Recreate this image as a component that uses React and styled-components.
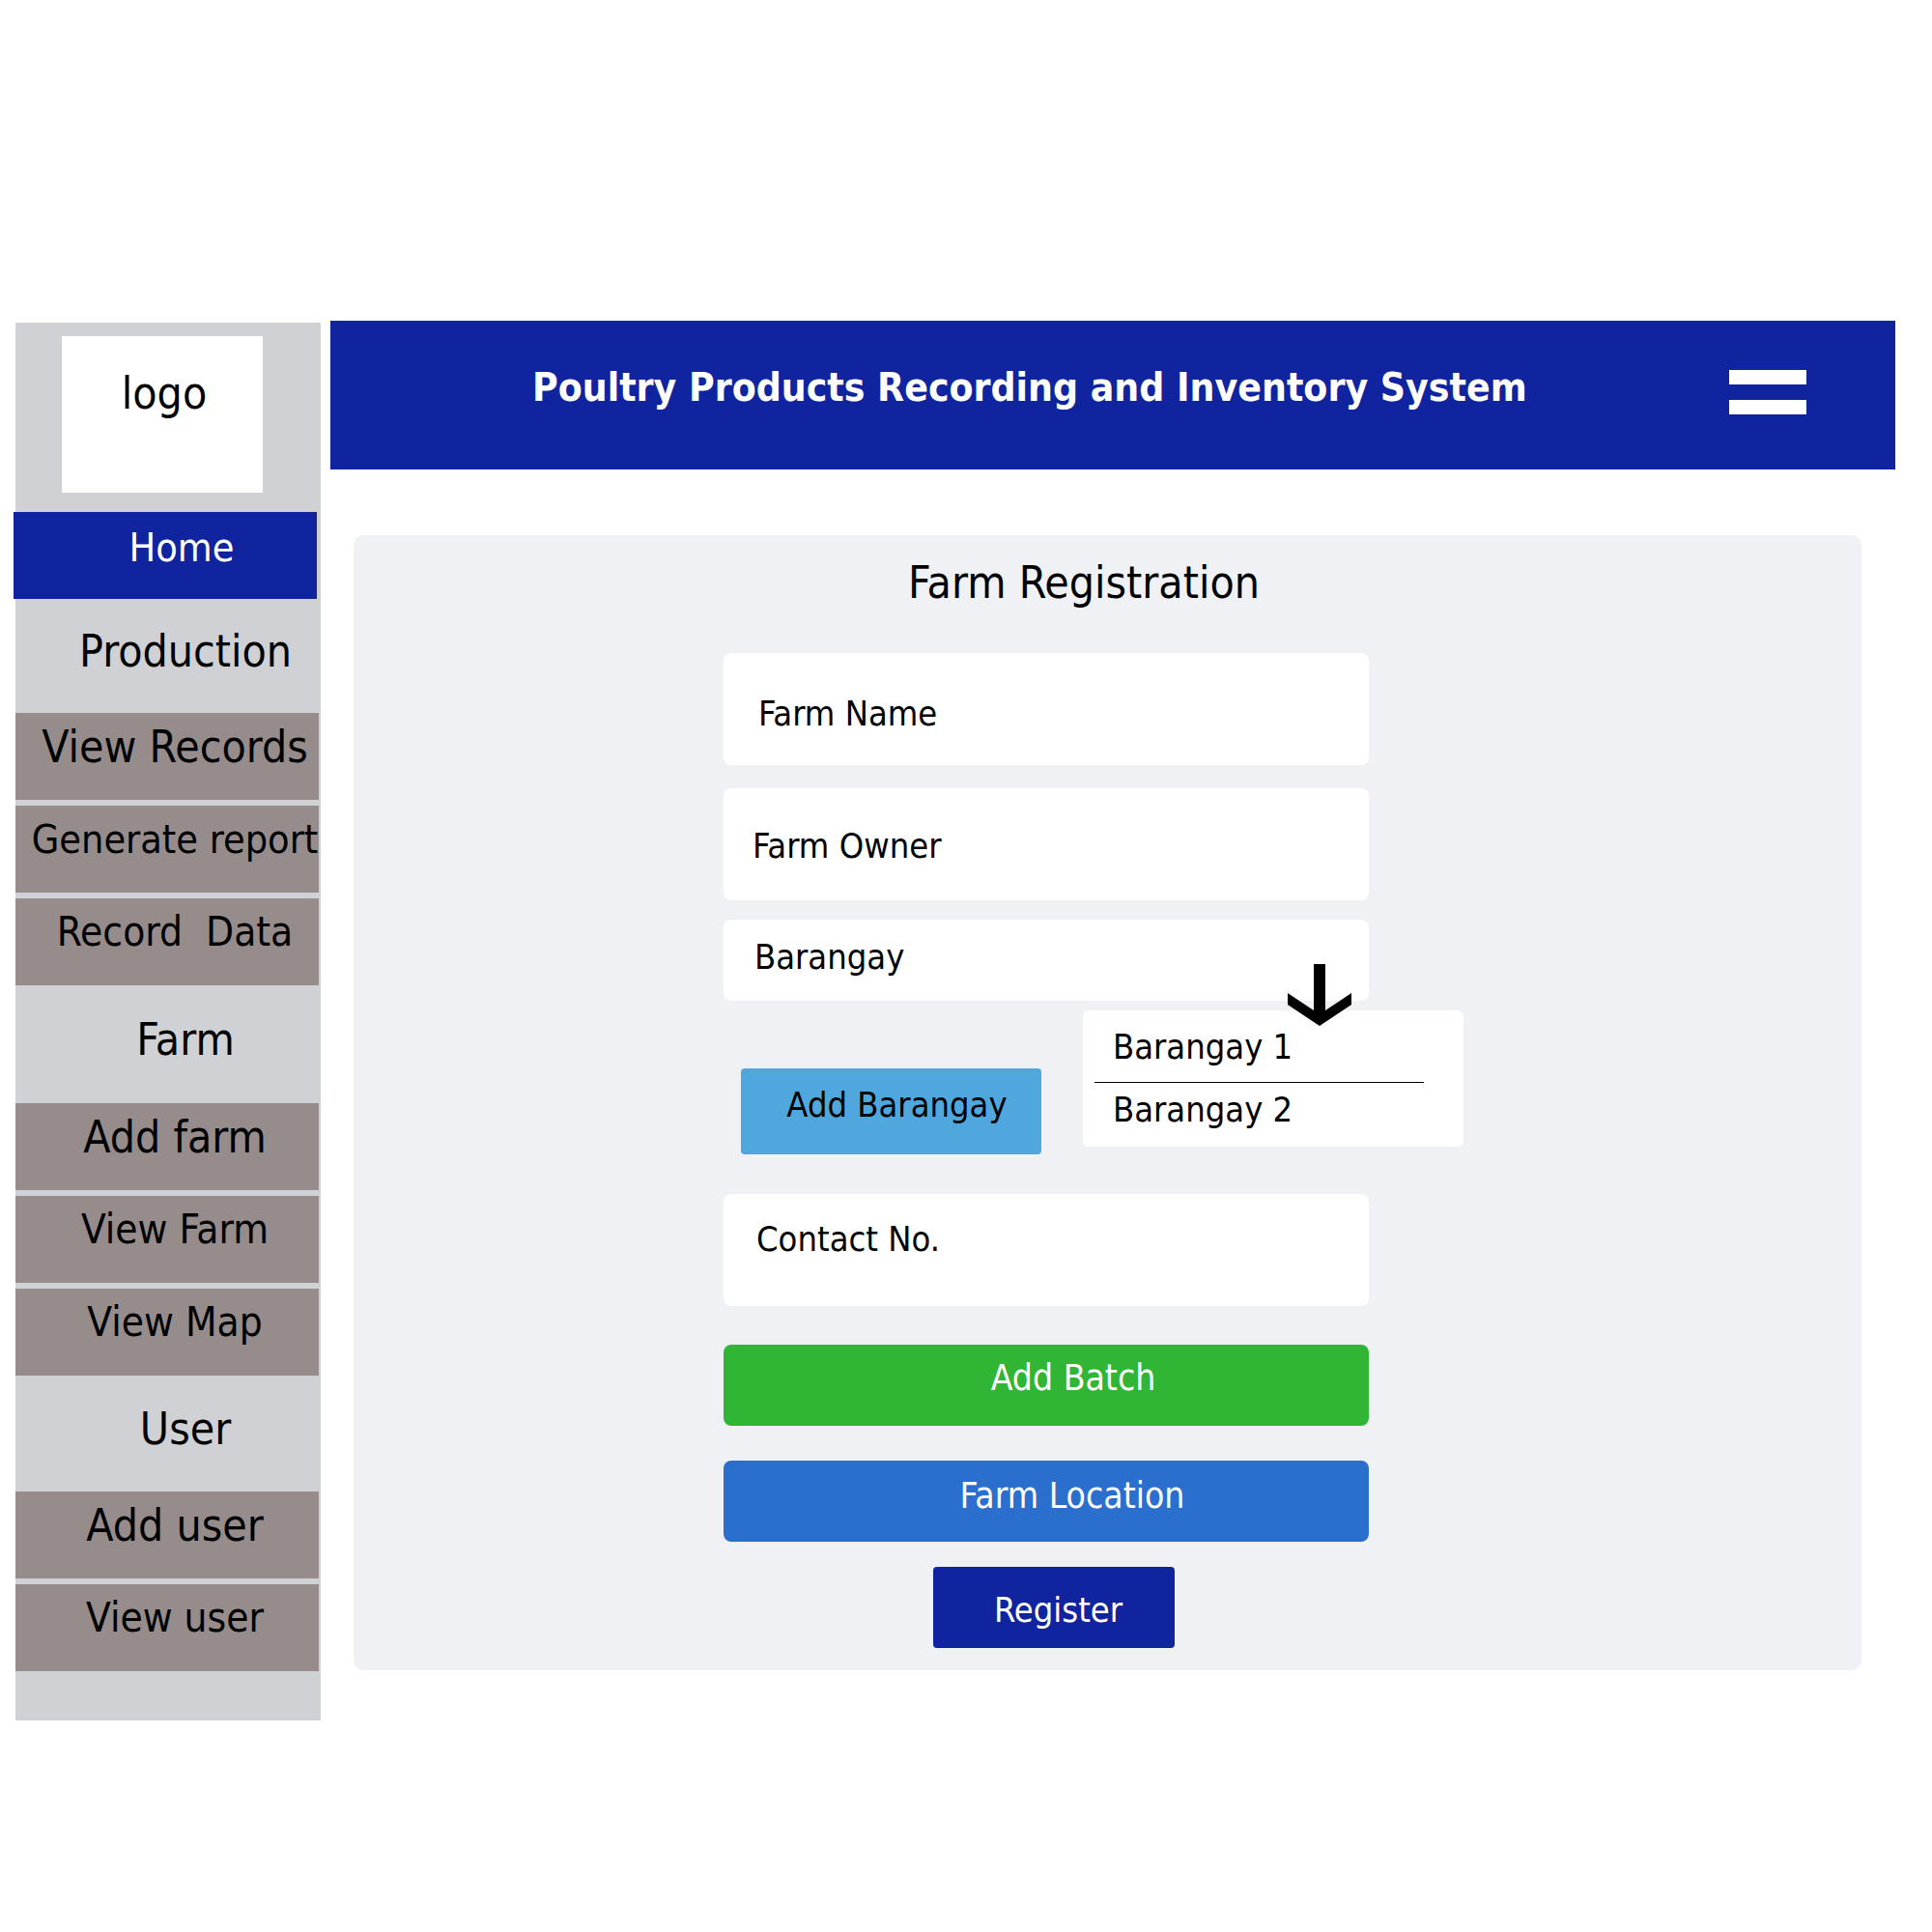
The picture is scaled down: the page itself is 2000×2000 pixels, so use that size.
import React from "react";
import styled, { createGlobalStyle } from "styled-components";

const GlobalStyle = createGlobalStyle`
  body {
    margin: 0;
    background: #ffffff;
    font-family: "DejaVu Sans Condensed", "DejaVu Sans", sans-serif;
    color: #000;
  }
`;

const farmLinks = [
  { title: "Add farm", size: 46 },
  { title: "View Farm", size: 42 },
  { title: "View Map", size: 42 },
];

const productionLinks = [
  { title: "View Records", size: 46 },
  { title: "Generate report", size: 41 },
  { title: "Record\u00a0\u00a0Data", size: 42 },
];

const userLinks = [
  { title: "Add user", size: 46 },
  { title: "View user", size: 42 },
];

function DownArrow() {
  return (
    <ArrowMark width="66" height="64" viewBox="0 0 66 64">
      <polygon
        points="0,30 27,48 27,0 39,0 39,48 66,30 66,42 33,64 0,42"
        fill="#000"
      />
    </ArrowMark>
  );
}

export default function App() {
  return (
    <>
      <GlobalStyle />
      <Page>
        <Sidebar>
          <LogoBox>logo</LogoBox>
          <HomeLink>Home</HomeLink>

          <SectionTitle $h={118}>Production</SectionTitle>
          {productionLinks.map((el) => (
            <NavItem key={el.title} $size={el.size}>
              {el.title}
            </NavItem>
          ))}

          <SectionTitle $h={122}>Farm</SectionTitle>
          {farmLinks.map((el) => (
            <NavItem key={el.title} $size={el.size}>
              {el.title}
            </NavItem>
          ))}

          <SectionTitle $h={120}>User</SectionTitle>
          {userLinks.map((el) => (
            <NavItem key={el.title} $size={el.size}>
              {el.title}
            </NavItem>
          ))}
        </Sidebar>

        <Main>
          <Header>
            <HeaderTitle>Poultry Products Recording and Inventory System</HeaderTitle>
            <MenuButton aria-label="menu">
              <MenuBar />
              <MenuBar />
            </MenuButton>
          </Header>

          <Panel>
            <PanelTitle>Farm Registration</PanelTitle>

            <FormCol>
              <Field $h={116} $pl={36} $pt={9}>
                Farm Name
              </Field>
              <Field $h={116} $pl={30} $pt={3} $mt={24}>
                Farm Owner
              </Field>
              <Field $h={84} $pl={32} $pb={8} $mt={20}>
                Barangay
              </Field>

              <BarangayRow>
                <ActionButton
                  $w={311}
                  $h={89}
                  $bg="#50a7dd"
                  $color="#000"
                  $pl={12}
                  $pb={14}
                  $radius={4}
                  $ml={18}
                  $mt={60}
                >
                  Add Barangay
                </ActionButton>
                <Dropdown>
                  <DownArrow />
                  <Option $h={74}>Barangay 1</Option>
                  <Divider />
                  <Option $h={54}>Barangay 2</Option>
                </Dropdown>
              </BarangayRow>

              <Field $h={116} $pl={34} $pb={24} $mt={41}>
                Contact No.
              </Field>

              <ActionButton
                $w={668}
                $h={84}
                $bg="#31b535"
                $pl={56}
                $pb={16}
                $radius={8}
                $mt={40}
                $size={37}
              >
                Add Batch
              </ActionButton>
              <ActionButton
                $w={668}
                $h={84}
                $bg="#2a6fce"
                $pl={54}
                $pb={12}
                $radius={8}
                $mt={36}
                $size={37}
              >
                Farm Location
              </ActionButton>
              <ActionButton
                $w={250}
                $h={84}
                $bg="#0f249e"
                $pl={9}
                $pt={4}
                $radius={4}
                $mt={26}
                $ml={217}
              >
                Register
              </ActionButton>
            </FormCol>
          </Panel>
        </Main>
      </Page>
    </>
  );
}

const Page = styled.div`
  display: flex;
  align-items: flex-start;
  padding: 332px 0 0 16px;
`;

const Sidebar = styled.nav`
  width: 316px;
  margin-top: 2px;
  padding: 14px 0 51px;
  background-color: #d0d1d5;
  display: flex;
  flex-direction: column;
`;

const LogoBox = styled.div`
  width: 208px;
  height: 162px;
  margin-left: 48px;
  box-sizing: border-box;
  padding: 32px 0 0 4px;
  background: #ffffff;
  text-align: center;
  font-size: 46px;
`;

const HomeLink = styled.div`
  width: 314px;
  height: 90px;
  margin: 20px 0 0 -2px;
  box-sizing: border-box;
  padding: 0 0 16px 34px;
  background: #0f249e;
  color: #ffffff;
  font-size: 41px;
  display: flex;
  align-items: center;
  justify-content: center;
  white-space: nowrap;
`;

const SectionTitle = styled.div`
  height: ${(p) => p.$h}px;
  box-sizing: border-box;
  padding: 0 0 10px 36px;
  font-size: 46px;
  display: flex;
  align-items: center;
  justify-content: center;
  white-space: nowrap;
`;

const NavItem = styled.div`
  width: 314px;
  height: 90px;
  box-sizing: border-box;
  padding: 0 0 21px 16px;
  background: #958c8b;
  font-size: ${(p) => p.$size}px;
  display: flex;
  align-items: center;
  justify-content: center;
  white-space: nowrap;

  & + & {
    margin-top: 6px;
  }
`;

const Main = styled.main`
  width: 1620px;
  margin-left: 10px;
  display: flex;
  flex-direction: column;
`;

const Header = styled.header`
  height: 154px;
  background: #0f249e;
  display: flex;
  align-items: flex-start;
  padding-left: 209px;
`;

const HeaderTitle = styled.h1`
  margin: 45px 0 0;
  color: #ffffff;
  font-size: 40.5px;
  font-weight: bold;
  white-space: nowrap;
`;

const MenuButton = styled.div`
  margin: 51px 92px 0 auto;
  display: flex;
  flex-direction: column;
  gap: 16px;
`;

const MenuBar = styled.span`
  display: block;
  width: 80px;
  height: 15px;
  background: #ffffff;
`;

const Panel = styled.section`
  margin: 68px 35px 0 24px;
  padding: 22px 0 23px;
  background: #f0f1f5;
  border-radius: 10px;
`;

const PanelTitle = styled.h2`
  margin: 0;
  padding-right: 49px;
  text-align: center;
  font-size: 46px;
  font-weight: normal;
`;

const FormCol = styled.div`
  width: 668px;
  margin: 46px 0 0 383px;
  display: flex;
  flex-direction: column;
  align-items: flex-start;
`;

const Field = styled.div`
  width: 100%;
  height: ${(p) => p.$h}px;
  margin-top: ${(p) => p.$mt || 0}px;
  box-sizing: border-box;
  padding: ${(p) => p.$pt || 0}px 0 ${(p) => p.$pb || 0}px ${(p) => p.$pl}px;
  background: #ffffff;
  border-radius: 8px;
  font-size: 36px;
  display: flex;
  align-items: center;
`;

const BarangayRow = styled.div`
  margin-top: 10px;
  display: flex;
  align-items: flex-start;
`;

const ActionButton = styled.button`
  flex-shrink: 0;
  width: ${(p) => p.$w}px;
  height: ${(p) => p.$h}px;
  margin: ${(p) => p.$mt || 0}px 0 0 ${(p) => p.$ml || 0}px;
  box-sizing: border-box;
  padding: ${(p) => p.$pt || 0}px 0 ${(p) => p.$pb || 0}px ${(p) => p.$pl || 0}px;
  border: none;
  border-radius: ${(p) => p.$radius}px;
  background: ${(p) => p.$bg};
  color: ${(p) => p.$color || "#ffffff"};
  font-family: inherit;
  font-size: ${(p) => p.$size || 36}px;
  display: flex;
  align-items: center;
  justify-content: center;
  white-space: nowrap;
`;

const Dropdown = styled.div`
  position: relative;
  flex-shrink: 0;
  width: 394px;
  height: 141px;
  margin-left: 43px;
  background: #ffffff;
  border-radius: 6px;
  display: flex;
  flex-direction: column;
`;

const ArrowMark = styled.svg`
  position: absolute;
  left: 212px;
  top: -48px;
`;

const Option = styled.div`
  height: ${(p) => p.$h}px;
  padding-left: 31px;
  font-size: 36px;
  display: flex;
  align-items: center;
  white-space: nowrap;
`;

const Divider = styled.hr`
  margin: 0 41px 0 12px;
  border: none;
  border-top: 1.5px solid #000;
  height: 0;
`;
